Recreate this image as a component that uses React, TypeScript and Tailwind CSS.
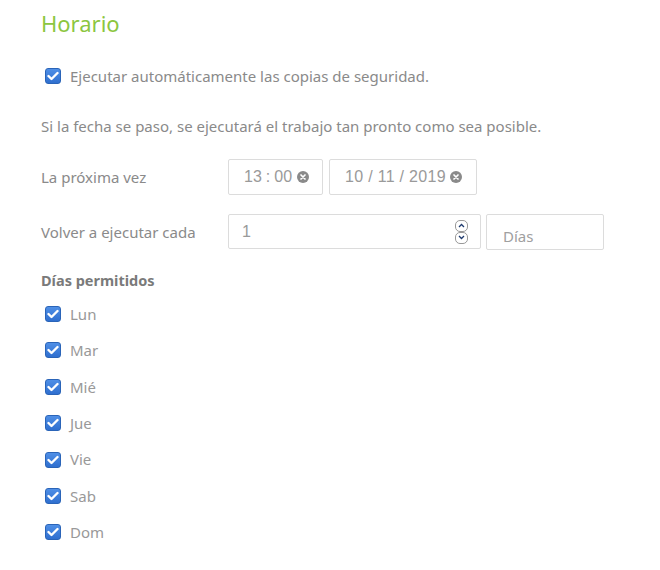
import React from "react";

function Check() {
  return (
    <span className="inline-flex h-[16px] w-[16px] shrink-0 items-center justify-center rounded-[3px] border border-[#2a64b8] bg-gradient-to-b from-[#4f8fe6] to-[#2f6fcf]">
      <svg width="12" height="10" viewBox="0 0 12 10">
        <path d="M1.5 5 L4.5 8 L10.5 2" fill="none" stroke="white" strokeWidth="2.4" strokeLinecap="round" strokeLinejoin="round" />
      </svg>
    </span>
  );
}

function Clear() {
  return (
    <svg width="12" height="12" viewBox="0 0 12 12" className="shrink-0">
      <circle cx="6" cy="6" r="6" fill="#8a8a8a" />
      <path d="M4 4 L8 8 M8 4 L4 8" stroke="white" strokeWidth="1.7" strokeLinecap="round" />
    </svg>
  );
}

const days = ["Lun", "Mar", "Mié", "Jue", "Vie", "Sab", "Dom"];

export default function App() {
  return (
    <div className="h-[570px] w-[660px] bg-white pl-[41px] pt-[9px] text-[#8a8a8a]" style={{ fontFamily: '"Noto Sans", sans-serif' }}>
      <h1 className="text-[22px] leading-[28px] text-[#8cc63f]">Horario</h1>
      <div className="mt-[29px] flex h-[20px] items-center gap-[9px] pl-[4px] text-[15px] leading-[20px]">
        <Check />
        <span>Ejecutar automáticamente las copias de seguridad.</span>
      </div>
      <p className="mt-[30px] text-[15px] leading-[20px]">Si la fecha se paso, se ejecutará el trabajo tan pronto como sea posible.</p>
      <div className="mt-[23px] flex h-[36px] items-center text-[15px]">
        <span className="w-[187px]">La próxima vez</span>
        <div className="flex gap-[6px]" style={{ fontFamily: '"Liberation Sans", sans-serif' }}>
          <div className="flex h-[36px] w-[95px] items-center gap-[5px] rounded-[2px] border border-[#dcdcdc] pl-[15px] text-[16px] text-[#9a9a9a]">
            <span>13<span className="mx-[4px]">:</span>00</span>
            <Clear />
          </div>
          <div className="flex h-[36px] w-[148px] items-center gap-[4px] rounded-[2px] border border-[#dcdcdc] pl-[15px] text-[16px] tracking-[0.3px] text-[#9a9a9a]">
            <span>10 / 11 / 2019</span>
            <Clear />
          </div>
        </div>
      </div>
      <div className="mt-[19px] flex h-[36px] items-center text-[15px]">
        <span className="w-[187px]">Volver a ejecutar cada</span>
        <div className="flex h-[35px] w-[253px] items-center justify-between self-start rounded-[2px] border border-[#dcdcdc] pl-[13px] pr-[12px] text-[16px] text-[#9a9a9a]" style={{ fontFamily: '"Liberation Sans", sans-serif' }}>
          <span>1</span>
          <div className="flex flex-col">
            <span className="flex h-[12px] w-[13px] items-center justify-center rounded-[5px] border border-[#999]">
              <svg width="7" height="5" viewBox="0 0 7 5"><path d="M1 4 L3.5 1.5 L6 4" fill="none" stroke="#1e3a6e" strokeWidth="1.3" /></svg>
            </span>
            <span className="flex h-[12px] w-[13px] items-center justify-center rounded-[5px] border border-[#999]">
              <svg width="7" height="5" viewBox="0 0 7 5"><path d="M1 1 L3.5 3.5 L6 1" fill="none" stroke="#1e3a6e" strokeWidth="1.3" /></svg>
            </span>
          </div>
        </div>
        <div className="ml-[5px] flex h-[36px] w-[118px] items-end rounded-[2px] border border-[#dcdcdc] pb-[2px] pl-[16px] text-[15px] text-[#a0a0a0]">
          <span>Días</span>
        </div>
      </div>
      <div className="mt-[20px] text-[14.5px] font-bold leading-[20px] text-[#7a7a7a]">Días permitidos</div>
      <div className="mt-[14px] flex flex-col gap-[16.4px] pl-[4px] text-[15px]">
        {days.map((d) => (
          <div key={d} className="flex h-[20px] items-center gap-[9px]">
            <Check />
            <span className="text-[#999]">{d}</span>
          </div>
        ))}
      </div>
    </div>
  );
}
